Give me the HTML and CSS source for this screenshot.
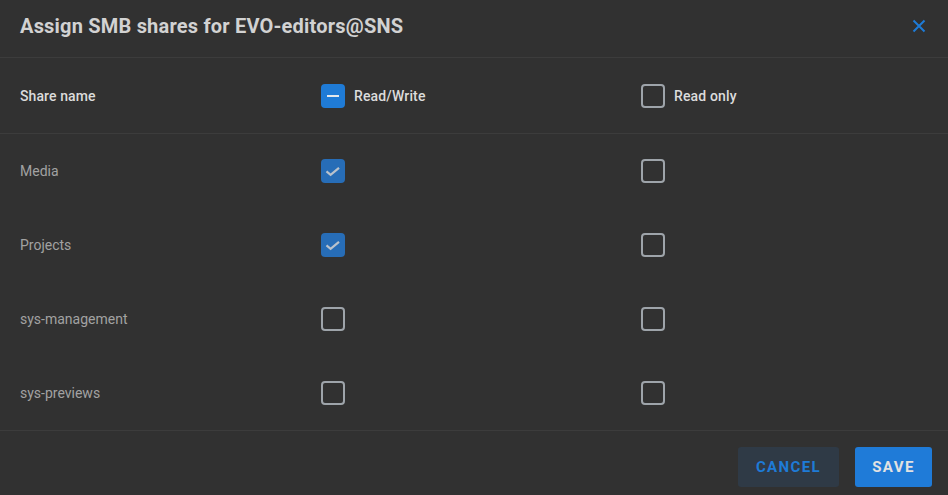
FILE: index.html
```html
<!DOCTYPE html>
<html>
<head>
<meta charset="utf-8">
<link rel="stylesheet" href="styles.css">
</head>
<body>
<div class="dialog">
  <div class="header">
    <h1 class="title">Assign SMB shares for EVO-editors@SNS</h1>
    <button class="close" aria-label="Close">
      <svg width="14" height="14" viewBox="0 0 14 14"><path d="M1.5 1.5 L12.5 12.5 M12.5 1.5 L1.5 12.5" stroke="#1e7bd6" stroke-width="2" fill="none"/></svg>
    </button>
  </div>
  <div class="table">
    <div class="row head">
      <div class="cell name">Share name</div>
      <div class="cell"><span class="cb indeterminate"><span class="dash"></span></span><span class="lbl">Read/Write</span></div>
      <div class="cell"><span class="cb"></span><span class="lbl">Read only</span></div>
    </div>
    <div class="row">
      <div class="cell name">Media</div>
      <div class="cell"><span class="cb checked"><svg width="24" height="24" viewBox="0 0 24 24"><path d="M5.5 12.3 L9.6 15.8 L18 8.8" stroke="#b9c2cc" stroke-width="2.2" fill="none"/></svg></span></div>
      <div class="cell"><span class="cb"></span></div>
    </div>
    <div class="row">
      <div class="cell name">Projects</div>
      <div class="cell"><span class="cb checked"><svg width="24" height="24" viewBox="0 0 24 24"><path d="M5.5 12.3 L9.6 15.8 L18 8.8" stroke="#b9c2cc" stroke-width="2.2" fill="none"/></svg></span></div>
      <div class="cell"><span class="cb"></span></div>
    </div>
    <div class="row">
      <div class="cell name">sys-management</div>
      <div class="cell"><span class="cb"></span></div>
      <div class="cell"><span class="cb"></span></div>
    </div>
    <div class="row last">
      <div class="cell name">sys-previews</div>
      <div class="cell"><span class="cb"></span></div>
      <div class="cell"><span class="cb"></span></div>
    </div>
  </div>
  <div class="footer">
    <button class="btn cancel">CANCEL</button>
    <button class="btn save">SAVE</button>
  </div>
</div>
</body>
</html>
```

FILE: styles.css
```css
html, body {
  margin: 0;
  padding: 0;
  background: #313131;
  font-family: Roboto, "Liberation Sans", sans-serif;
}
.dialog {
  width: 948px;
  background: #313131;
}
.header {
  height: 58px;
  box-sizing: border-box;
  border-bottom: 1px solid #3c3c3c;
  display: flex;
  align-items: center;
  justify-content: space-between;
  padding: 0 20px 6px 20px;
}
.title {
  margin: 0;
  font-size: 20px;
  font-weight: 700;
  color: #d2d2d2;
  letter-spacing: 0.2px;
}
.close {
  background: none;
  border: none;
  padding: 0;
  margin-right: 2px;
  width: 14px;
  height: 14px;
  display: flex;
}
.row {
  display: grid;
  grid-template-columns: 301px 320px 1fr;
  padding-left: 20px;
  height: 74px;
  align-items: center;
}
.row.head {
  height: 75px;
  border-bottom: 1px solid #3c3c3c;
}
.row.last {
  border-bottom: 1px solid #3c3c3c;
}
.cell {
  display: flex;
  align-items: center;
  font-size: 14px;
}
.name {
  color: #a2a2a2;
}
.head .name {
  color: #dcdcdc;
  font-weight: 500;
  letter-spacing: 0.1px;
}
.lbl {
  margin-left: 9px;
  color: #dcdcdc;
  font-weight: 500;
  letter-spacing: 0.15px;
}
.cb {
  width: 24px;
  height: 24px;
  box-sizing: border-box;
  border: 2px solid #9ea4aa;
  border-radius: 4px;
  display: flex;
  align-items: center;
  justify-content: center;
}
.cb.checked {
  border: none;
  background: #276db7;
}
.cb.indeterminate {
  border: none;
  background: #1f7bd6;
}
.dash {
  width: 12px;
  height: 2px;
  background: #e4e8ec;
}
.footer {
  display: flex;
  justify-content: flex-end;
  gap: 16px;
  padding: 16px 16px 16px 0;
}
.btn {
  height: 40px;
  border: none;
  border-radius: 3px;
  font-family: Roboto, "Liberation Sans", sans-serif;
  font-size: 15px;
  font-weight: 700;
  letter-spacing: 1.4px;
  cursor: pointer;
}
.cancel {
  width: 101px;
  background: #2f3a46;
  color: #1e7bd6;
}
.save {
  width: 77px;
  background: #1f7bd8;
  color: #e2e2e2;
}
```
